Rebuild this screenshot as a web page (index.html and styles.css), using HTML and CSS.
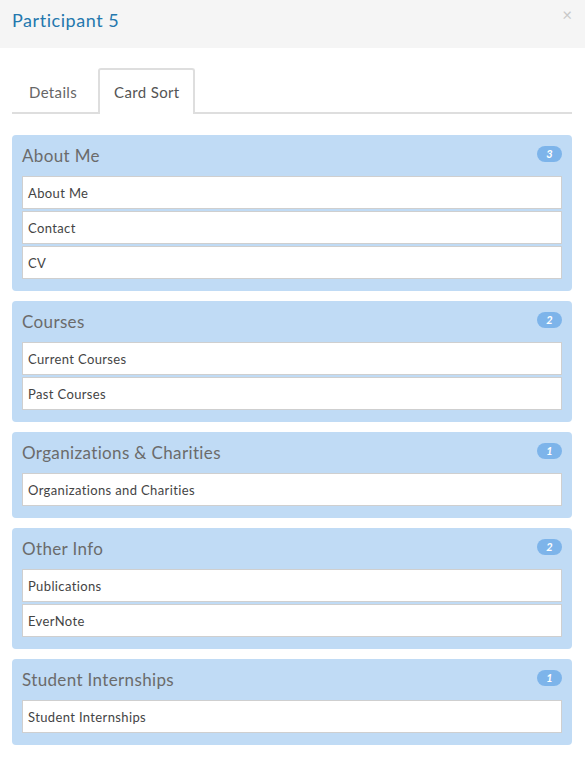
FILE: index.html
```html
<!DOCTYPE html>
<html>
<head>
<meta charset="utf-8">
<link rel="stylesheet" href="styles.css">
</head>
<body>
<div class="modal">
  <div class="modal-header">
    <h1 class="modal-title">Participant 5</h1>
    <span class="close">&times;</span>
  </div>
  <div class="modal-body">
    <div class="tabs">
      <div class="tab">Details</div>
      <div class="tab active">Card Sort</div>
    </div>
    <div class="groups">
      <div class="group">
        <div class="group-head"><span class="group-title">About Me</span><span class="badge">3</span></div>
        <div class="card">About Me</div>
        <div class="card">Contact</div>
        <div class="card">CV</div>
      </div>
      <div class="group">
        <div class="group-head"><span class="group-title">Courses</span><span class="badge">2</span></div>
        <div class="card">Current Courses</div>
        <div class="card">Past Courses</div>
      </div>
      <div class="group">
        <div class="group-head"><span class="group-title">Organizations &amp; Charities</span><span class="badge">1</span></div>
        <div class="card">Organizations and Charities</div>
      </div>
      <div class="group">
        <div class="group-head"><span class="group-title">Other Info</span><span class="badge">2</span></div>
        <div class="card">Publications</div>
        <div class="card">EverNote</div>
      </div>
      <div class="group">
        <div class="group-head"><span class="group-title">Student Internships</span><span class="badge">1</span></div>
        <div class="card">Student Internships</div>
      </div>
    </div>
  </div>
</div>
</body>
</html>
```
FILE: styles.css
```css
* { box-sizing: border-box; }
html, body { margin: 0; padding: 0; background: #fff; }
body { font-family: Lato, "Open Sans", sans-serif; color: #555; }

.modal { width: 585px; }

.modal-header {
  background: #f5f5f5;
  height: 48px;
  display: flex;
  align-items: flex-start;
  justify-content: space-between;
  padding: 8px 12px 0 12px;
}
.modal-title {
  margin: 0;
  font-weight: 400;
  font-size: 18px;
  line-height: 24px;
  color: #2478ae;
  letter-spacing: 0.55px;
}
.close {
  font-size: 17px;
  line-height: 14px;
  color: #c8c8c8;
  margin-right: 1px;
}

.modal-body { padding: 21px 13px 0 12px; }

.tabs {
  display: flex;
  align-items: flex-end;
  border-bottom: 2px solid #dedede;
  height: 45px;
}
.tab {
  font-size: 15px;
  color: #666;
  display: flex;
  align-items: center;
  padding: 0 16px 0 15px;
  margin-right: 3px;
  border: 2px solid transparent;
  border-bottom: none;
  margin-bottom: -2px;
  height: 46px;
  border-radius: 3px 3px 0 0;
  letter-spacing: 0.35px;
}
.tab.active {
  border-color: #dedede;
  background: #fff;
  color: #555;
  padding: 0 13px 0 14px;
}

.groups {
  display: flex;
  flex-direction: column;
  gap: 10px;
  margin-top: 21px;
}
.group {
  background: #c0dbf5;
  border-radius: 4px;
  padding: 0 10px 12px 10px;
}
.group-head {
  height: 41px;
  display: flex;
  align-items: center;
  justify-content: space-between;
  padding-bottom: 1px;
}
.group-title {
  font-size: 17px;
  color: #6b6b6b;
  letter-spacing: 0.36px;
}
.badge {
  background: #7db4ea;
  color: #fff;
  font-size: 11px;
  font-weight: 700;
  font-style: italic;
  min-width: 25px;
  height: 16px;
  border-radius: 8px;
  display: flex;
  align-items: center;
  justify-content: center;
  margin-top: -3px;
}
.card {
  background: #fff;
  border: 1px solid #cfcfcf;
  height: 33px;
  display: flex;
  align-items: center;
  padding: 0 5px;
  font-size: 13px;
  color: #444;
  letter-spacing: 0.37px;
}
.card + .card { margin-top: 2px; }
```
